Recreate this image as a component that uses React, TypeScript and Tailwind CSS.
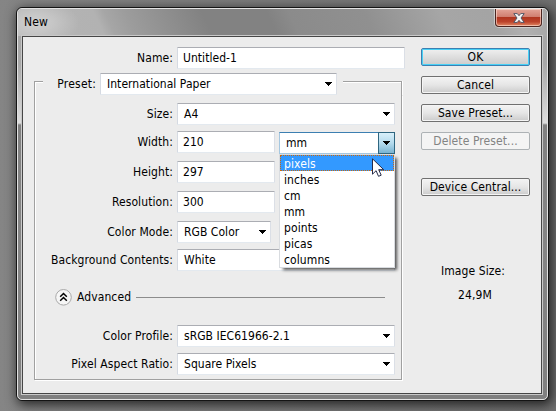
import type { ReactNode } from 'react';

const units = ['pixels', 'inches', 'cm', 'mm', 'points', 'picas', 'columns'];

function Arrow() {
  return (
    <svg width="7" height="4" viewBox="0 0 7 4" className="shrink-0" shapeRendering="crispEdges">
      <path d="M0 0h7v1H6v1H5v1H4v1H3V3H2V2H1V1H0z" fill="#000" />
    </svg>
  );
}

function Row({ label, className, children }: { label: string; className: string; children: ReactNode }) {
  return (
    <div className={`flex h-[22px] items-center ${className}`}>
      <div className="mr-1 flex-1 text-right whitespace-nowrap">{label}</div>
      {children}
    </div>
  );
}

function Field({ value, width, select = false }: { value: string; width: string; select?: boolean }) {
  return (
    <div
      className={`flex h-[22px] items-center justify-between rounded-[1px] border border-t-[#abadb3] border-r-[#dbdfe6] border-b-[#e3e9ef] border-l-[#d5dae2] bg-white pr-[4px] ${select ? 'pl-[6px]' : 'pl-[5px]'} ${width}`}
    >
      <span className="tracking-[0.04px] whitespace-nowrap">{value}</span>
      {select && <Arrow />}
    </div>
  );
}

function Button({ label, className }: { label: string; className: string }) {
  return (
    <button
      className={`flex h-[18px] w-[109px] items-center justify-center rounded-[2px] border text-[12px] leading-none ${className}`}
    >
      {label}
    </button>
  );
}

const normal =
  'border-[#707070] bg-linear-to-b from-[#f3f3f3] from-0% via-[#e6e6e6] via-50% to-[#cbcbcb] shadow-[inset_0_0_0_1px_#f5f5f5]';

export default function App() {
  return (
    <div className="h-[411px] w-[556px] overflow-hidden bg-linear-to-r from-[#858585] to-[#707070] pt-[7px] pl-[16px] font-['DejaVu_Sans_Condensed','DejaVu_Sans',sans-serif] text-[12px] leading-[16px] tracking-[0.1px] text-black">
      <div className="flex h-[394px] w-[533px] flex-col rounded-[6px] border border-[#141414] bg-[#838383] shadow-[2px_3px_12px_1px_rgba(0,0,0,0.7)]">
        <div className="flex h-full flex-col rounded-[5px] border border-[#e2e2e2] bg-[linear-gradient(180deg,#a6a6a6_0px,#a8a8a8_55px,#dedede_114px,#818181_116px,#858585_240px,#808080_100%)]">
          <div className="flex h-[27px] shrink-0 justify-between rounded-t-[4px] bg-[radial-gradient(ellipse_44px_24px_at_17px_14px,#d0d0d0_0%,#c6c6c6_40%,rgba(181,181,181,0)_100%),linear-gradient(65deg,#b5b5b5_0%,#b2b2b2_16%,#a6a6a6_18%,#9c9c9c_22%,#828282_36%,#828282_48%,#8b8b8b_52%,#909090_66%,#a6a6a6_80%,#a4a4a4_89%,#b0b0b0_94%,#a5a5a5_100%)] pl-[6px]">
            <span className="pt-[5px]">New</span>
            <div className="mr-[5px] flex h-[18px] w-[47px] items-center justify-center rounded-b-[4px] border border-t-0 border-[#4b2520] bg-[linear-gradient(180deg,#e3a598_0%,#d07f70_45%,#b03620_50%,#bc432b_75%,#e28a65_100%)] shadow-[inset_0_0_0_1px_rgba(255,225,215,0.6),0_0_0_1px_rgba(240,240,240,0.5)]">
              <svg width="12" height="10" viewBox="0 0 12 10">
                <path d="M.8.6h3.5L6 2.7 7.7.6h3.5L8 5l3.2 4.4H7.7L6 7.3 4.3 9.4H.8L4 5z" fill="#f4f4f4" stroke="#545766" strokeWidth="1" />
              </svg>
            </div>
          </div>
          <div className="mr-[5px] ml-[4px] flex h-[358px] shrink-0 border border-[#464646] bg-[#ececec] shadow-[0_0_0_1px_#c9c9c9]">
            <div className="ml-[11px] flex w-[368px] flex-col pt-[10px]">
              <Row label="Name:" className="pr-[7px]">
                <Field value="Untitled-1" width="w-[228px] -mr-[10px]" />
              </Row>
              <div className="mt-[4px] flex h-[22px] items-end">
                <div className="h-[14px] w-[9px] border-t border-l border-[#a0a0a0] shadow-[inset_1px_1px_0_#fff]" />
                <div className="mr-[4px] flex-1 self-center text-right tracking-[0.2px]">Preset:</div>
                <Field value="International Paper" width="w-[237px]" select />
                <div className="ml-[6px] h-[14px] w-[59px] border-t border-r border-[#a0a0a0] shadow-[1px_0_0_#fff,inset_0_1px_0_#fff]" />
              </div>
              <div className="flex h-[285px] flex-col border border-t-0 border-[#a0a0a0] pr-[6px] shadow-[inset_1px_0_0_#fff,1px_1px_0_#fff]">
                <Row label="Size:" className="mt-[8px]">
                  <Field value="A4" width="w-[218px]" select />
                </Row>
                <Row label="Width:" className="mt-[6px]">
                  <Field value="210" width="w-[98px]" />
                  <div className="relative ml-[4px] h-[22px] w-[116px]">
                    <div className="mt-px flex h-[22px] items-center border border-[#3c7fb1] border-b-[#a5c7e0] border-l-[#a5c7e0] bg-white pl-[6px]">
                      <span className="flex-1">mm</span>
                      <span className="-my-px -mr-px flex h-[22px] w-[17px] items-center justify-center border border-[#2f6680] bg-linear-to-b from-[#d9f0fa] via-[#b5dbed] to-[#79b4d2]">
                        <Arrow />
                      </span>
                    </div>
                    <div className="absolute top-[23px] left-0 z-10 w-[116px] border border-[#d9dce0] bg-white shadow-[3px_3px_3px_-1px_rgba(0,0,0,0.65)]">
                      {units.map((u, i) => (
                        <div
                          key={u}
                          className={`h-[16px] pl-[4px] leading-[18px] ${i === 0 ? 'bg-[#3399ff] text-white outline-1 -outline-offset-1 outline-dotted outline-[#c86a10]' : ''}`}
                        >
                          {u}
                        </div>
                      ))}
                    </div>
                    <svg className="absolute top-[27px] left-[93px] z-20" width="13" height="20" viewBox="0 0 13 20">
                      <path d="M.5.8v15.4l3.6-3.5 2.4 5.6 2.7-1.1-2.5-5.5h5z" fill="#fff" stroke="#262b48" />
                    </svg>
                  </div>
                </Row>
                <Row label="Height:" className="mt-[8px] pr-[120px]">
                  <Field value="297" width="w-[98px]" />
                </Row>
                <Row label="Resolution:" className="mt-[8px] pr-[120px]">
                  <Field value="300" width="w-[98px]" />
                </Row>
                <Row label="Color Mode:" className="mt-[8px] pr-[124px]">
                  <Field value="RGB Color" width="w-[94px]" select />
                </Row>
                <Row label="Background Contents:" className="mt-[6px]">
                  <Field value="White" width="w-[218px]" select />
                </Row>
                <div className="mt-[17px] flex h-[18px] items-center pl-[20px]">
                  <svg width="17" height="18" viewBox="0 0 17 18" className="shrink-0">
                    <circle cx="8.5" cy="9.3" r="7.8" fill="#f6f6f6" stroke="#a9a9a9" />
                    <path d="M5.2 8.7 8.5 5.5l3.3 3.2M5.2 12.7 8.5 9.5l3.3 3.2" fill="none" stroke="#000" strokeWidth="1.5" />
                  </svg>
                  <span className="ml-[5px]">Advanced</span>
                  <div className="mr-[10px] ml-[5px] h-px flex-1 bg-[#8c8c8c]" />
                </div>
                <Row label="Color Profile:" className="mt-[19px]">
                  <Field value="sRGB IEC61966-2.1" width="w-[218px]" select />
                </Row>
                <Row label="Pixel Aspect Ratio:" className="mt-[6px]">
                  <Field value="Square Pixels" width="w-[218px]" select />
                </Row>
              </div>
            </div>
            <div className="ml-[19px] flex w-[109px] flex-col items-center pt-[11px]">
              <Button label="OK" className="border-[#3c7fb1] bg-linear-to-b from-[#f0f0f0] to-[#cccccc] shadow-[inset_0_0_0_1px_#48d0f5]" />
              <Button label="Cancel" className={`mt-[10px] ${normal}`} />
              <Button label="Save Preset..." className={`mt-[10px] ${normal}`} />
              <Button label="Delete Preset..." className="mt-[10px] border-[#adb2b5] bg-[#f4f4f4] text-[#838383]" />
              <Button label="Device Central..." className={`mt-[28px] ${normal}`} />
              <div className="mt-[67px] mr-[5px]">Image Size:</div>
              <div className="mt-[8px] mr-[1px]">24,9M</div>
            </div>
          </div>
        </div>
      </div>
    </div>
  );
}
